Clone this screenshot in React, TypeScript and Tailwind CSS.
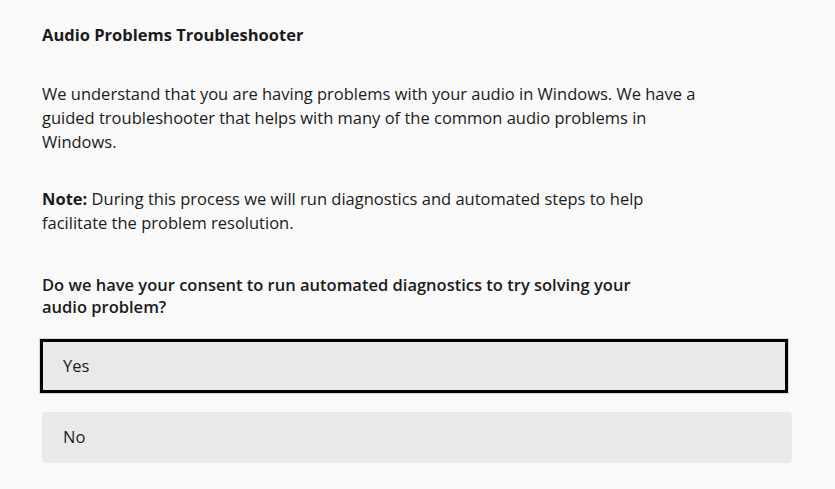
import React from 'react';

const FONT = "font-['Open_Sans','Noto_Sans',sans-serif]";

export default function App() {
  return (
    <div className={`min-h-screen bg-[#f9f9f9] text-[#1b1b1b] ${FONT}`}>
      <div className="flex flex-col pl-[42px] pt-[23px]">
        {/* Header */}
        <h1 className="text-[16.5px] font-bold leading-6">Audio Problems Troubleshooter</h1>

        <p className="mt-[35px] max-w-[668px] text-[16.5px] leading-6">
          We understand that you are having problems with your audio in Windows. We have a
          guided troubleshooter that helps with many of the common audio problems in Windows.
        </p>

        <p className="mt-[33px] max-w-[668px] text-[16.5px] leading-6">
          <span className="font-bold">Note:</span> During this process we will run diagnostics
          and automated steps to help facilitate the problem resolution.
        </p>

        <p className="mt-[39px] max-w-[612px] text-[16.5px] font-semibold leading-[22px]">
          Do we have your consent to run automated diagnostics to try solving your audio
          problem?
        </p>

        {/* Choices */}
        <div className="mt-[21px] flex flex-col">
          <button className="-ml-[2px] flex h-[54px] w-[748px] items-center border-[3px] border-black bg-[#e9e9e9] pl-[20px] text-left text-[16.5px] shadow-[0_0_0_1px_#d6d6d6]">
            Yes
          </button>
          <button className="mt-[19px] flex h-[51px] w-[750px] items-center rounded-[4px] bg-[#e9e9e9] pl-[21px] text-left text-[16.5px]">
            No
          </button>
        </div>
      </div>
    </div>
  );
}
